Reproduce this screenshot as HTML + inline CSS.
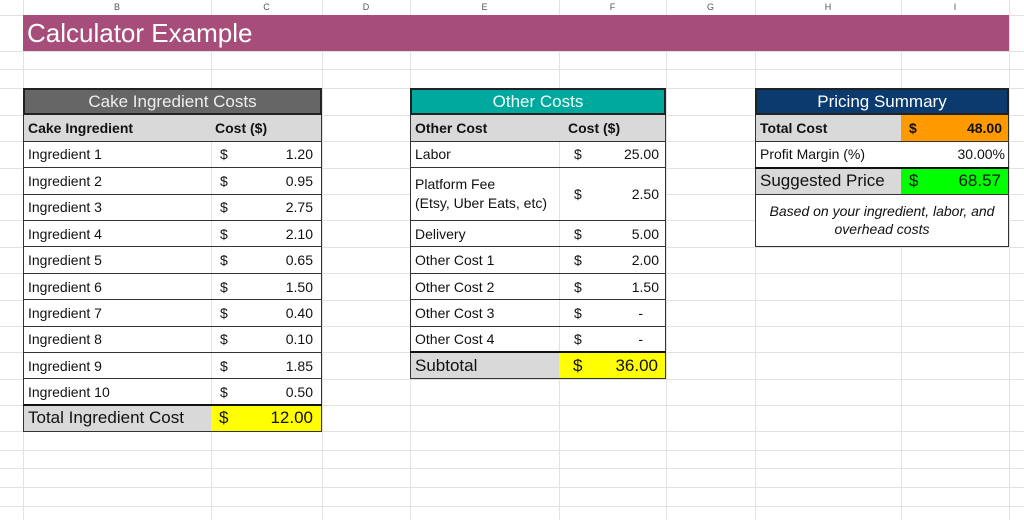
<!DOCTYPE html>
<html><head><meta charset="utf-8"><style>
body{margin:0;width:1024px;height:520px;overflow:hidden;background:#fff;position:relative;font-family:"Liberation Sans",Arial,sans-serif;color:#111}
.v{position:absolute;top:0;height:520px;width:1px;background:#e2e2e2}
.h{position:absolute;left:0;width:1024px;height:1px;background:#e2e2e2}
.ch{position:absolute;top:0;height:15px;font-size:9px;color:#555;text-align:center;line-height:14px}
.c{position:absolute;box-sizing:border-box;display:flex;align-items:center;padding:0 4px;white-space:nowrap;font-size:14px;background:#fff}
.b{font-weight:bold}
.r{justify-content:flex-end}
.ctr{justify-content:center}
.bl{position:absolute;background:#333}
</style></head><body>
<!-- grid -->
<div class="v" style="left:23px"></div><div class="v" style="left:211px"></div><div class="v" style="left:322px"></div><div class="v" style="left:410px"></div><div class="v" style="left:559px"></div><div class="v" style="left:666px"></div><div class="v" style="left:755px"></div><div class="v" style="left:901px"></div><div class="v" style="left:1009px"></div>
<div class="h" style="top:15px"></div><div class="h" style="top:51px"></div><div class="h" style="top:69px"></div><div class="h" style="top:88px"></div><div class="h" style="top:115px"></div><div class="h" style="top:141px"></div><div class="h" style="top:168px"></div><div class="h" style="top:194px"></div><div class="h" style="top:220px"></div><div class="h" style="top:247px"></div><div class="h" style="top:273px"></div><div class="h" style="top:300px"></div><div class="h" style="top:326px"></div><div class="h" style="top:352px"></div><div class="h" style="top:379px"></div><div class="h" style="top:405px"></div><div class="h" style="top:431px"></div><div class="h" style="top:450px"></div><div class="h" style="top:468px"></div><div class="h" style="top:487px"></div><div class="h" style="top:506px"></div>
<div class="ch" style="left:23px;width:188px">B</div><div class="ch" style="left:211px;width:111px">C</div><div class="ch" style="left:322px;width:88px">D</div><div class="ch" style="left:410px;width:149px">E</div><div class="ch" style="left:559px;width:107px">F</div><div class="ch" style="left:666px;width:89px">G</div><div class="ch" style="left:755px;width:146px">H</div><div class="ch" style="left:901px;width:108px">I</div>
<!-- title -->
<div class="c" style="left:23px;top:15px;width:986px;height:36px;background:#a64d79;color:#fff;font-size:26px;padding-left:4px">Calculator Example</div>

<!-- Ingredient table -->
<div class="c ctr" style="left:23px;top:88px;width:299px;height:27px;background:#666;color:#eee;font-size:17px;border:2px solid #222">Cake Ingredient Costs</div>
<div class="c b" style="left:24px;top:115px;width:187px;height:26px;background:#d9d9d9">Cake Ingredient</div>
<div class="c b" style="left:211px;top:115px;width:110px;height:26px;background:#d9d9d9">Cost ($)</div>
<div class="c" style="left:24px;top:141px;width:187px;height:26px">Ingredient 1</div><div class="c" style="left:212px;top:141px;width:109px;height:26px;justify-content:space-between;padding:0 8px">$<span>1.20</span></div>
<div class="c" style="left:24px;top:168px;width:187px;height:26px">Ingredient 2</div><div class="c" style="left:212px;top:168px;width:109px;height:26px;justify-content:space-between;padding:0 8px">$<span>0.95</span></div>
<div class="c" style="left:24px;top:194px;width:187px;height:26px">Ingredient 3</div><div class="c" style="left:212px;top:194px;width:109px;height:26px;justify-content:space-between;padding:0 8px">$<span>2.75</span></div>
<div class="c" style="left:24px;top:220px;width:187px;height:27px">Ingredient 4</div><div class="c" style="left:212px;top:220px;width:109px;height:27px;justify-content:space-between;padding:0 8px">$<span>2.10</span></div>
<div class="c" style="left:24px;top:247px;width:187px;height:26px">Ingredient 5</div><div class="c" style="left:212px;top:247px;width:109px;height:26px;justify-content:space-between;padding:0 8px">$<span>0.65</span></div>
<div class="c" style="left:24px;top:273px;width:187px;height:27px">Ingredient 6</div><div class="c" style="left:212px;top:273px;width:109px;height:27px;justify-content:space-between;padding:0 8px">$<span>1.50</span></div>
<div class="c" style="left:24px;top:300px;width:187px;height:26px">Ingredient 7</div><div class="c" style="left:212px;top:300px;width:109px;height:26px;justify-content:space-between;padding:0 8px">$<span>0.40</span></div>
<div class="c" style="left:24px;top:326px;width:187px;height:26px">Ingredient 8</div><div class="c" style="left:212px;top:326px;width:109px;height:26px;justify-content:space-between;padding:0 8px">$<span>0.10</span></div>
<div class="c" style="left:24px;top:352px;width:187px;height:27px">Ingredient 9</div><div class="c" style="left:212px;top:352px;width:109px;height:27px;justify-content:space-between;padding:0 8px">$<span>1.85</span></div>
<div class="c" style="left:24px;top:379px;width:187px;height:26px">Ingredient 10</div><div class="c" style="left:212px;top:379px;width:109px;height:26px;justify-content:space-between;padding:0 8px">$<span>0.50</span></div>
<div class="c" style="left:24px;top:405px;width:187px;height:26px;background:#d9d9d9;font-size:17px">Total Ingredient Cost</div>
<div class="c" style="left:211px;top:405px;width:110px;height:26px;background:#ff0;font-size:17px;justify-content:space-between;padding:0 8px">$<span>12.00</span></div>
<!-- borders ingredient -->
<div class="bl" style="left:23px;top:115px;width:1px;height:317px"></div>
<div class="bl" style="left:321px;top:115px;width:1px;height:317px"></div>
<div class="bl" style="left:23px;top:431px;width:299px;height:1px"></div>
<div class="bl" style="left:23px;top:141px;width:299px;height:1px"></div>
<div class="bl" style="left:23px;top:167px;width:299px;height:1px"></div>
<div class="bl" style="left:23px;top:194px;width:299px;height:1px"></div>
<div class="bl" style="left:23px;top:220px;width:299px;height:1px"></div>
<div class="bl" style="left:23px;top:246px;width:299px;height:1px"></div>
<div class="bl" style="left:23px;top:273px;width:299px;height:1px"></div>
<div class="bl" style="left:23px;top:299px;width:299px;height:1px"></div>
<div class="bl" style="left:23px;top:326px;width:299px;height:1px"></div>
<div class="bl" style="left:23px;top:352px;width:299px;height:1px"></div>
<div class="bl" style="left:23px;top:378px;width:299px;height:1px"></div>
<div class="bl" style="left:23px;top:404px;width:299px;height:2px;background:#111"></div>

<!-- Other costs -->
<div class="c ctr" style="left:410px;top:88px;width:256px;height:27px;background:#00a99d;color:#f4fffd;font-size:17px;border:2px solid #222">Other Costs</div>
<div class="c b" style="left:411px;top:115px;width:148px;height:26px;background:#d9d9d9">Other Cost</div>
<div class="c b" style="left:559px;top:115px;width:106px;height:26px;background:#d9d9d9;padding-left:9px">Cost ($)</div>
<div class="c" style="left:411px;top:141px;width:148px;height:26px">Labor</div><div class="c" style="left:560px;top:141px;width:105px;height:26px;justify-content:space-between;padding:0 6px 0 14px">$<span>25.00</span></div>
<div class="c" style="left:411px;top:168px;width:148px;height:52px;line-height:19px;white-space:normal"><span>Platform Fee<br>(Etsy, Uber Eats, etc)</span></div><div class="c" style="left:560px;top:168px;width:105px;height:52px;justify-content:space-between;padding:0 6px 0 14px">$<span>2.50</span></div>
<div class="c" style="left:411px;top:220px;width:148px;height:27px">Delivery</div><div class="c" style="left:560px;top:220px;width:105px;height:27px;justify-content:space-between;padding:0 6px 0 14px">$<span>5.00</span></div>
<div class="c" style="left:411px;top:247px;width:148px;height:26px">Other Cost 1</div><div class="c" style="left:560px;top:247px;width:105px;height:26px;justify-content:space-between;padding:0 6px 0 14px">$<span>2.00</span></div>
<div class="c" style="left:411px;top:273px;width:148px;height:27px">Other Cost 2</div><div class="c" style="left:560px;top:273px;width:105px;height:27px;justify-content:space-between;padding:0 6px 0 14px">$<span>1.50</span></div>
<div class="c" style="left:411px;top:300px;width:148px;height:26px">Other Cost 3</div><div class="c" style="left:560px;top:300px;width:105px;height:26px;justify-content:space-between;padding:0 22px 0 14px">$<span>-</span></div>
<div class="c" style="left:411px;top:326px;width:148px;height:26px">Other Cost 4</div><div class="c" style="left:560px;top:326px;width:105px;height:26px;justify-content:space-between;padding:0 22px 0 14px">$<span>-</span></div>
<div class="c" style="left:411px;top:352px;width:148px;height:27px;background:#d9d9d9;font-size:17px">Subtotal</div>
<div class="c" style="left:559px;top:352px;width:106px;height:27px;background:#ff0;font-size:17px;justify-content:space-between;padding:0 7px 0 14px">$<span>36.00</span></div>
<div class="bl" style="left:410px;top:115px;width:1px;height:264px"></div>
<div class="bl" style="left:665px;top:115px;width:1px;height:264px"></div>
<div class="bl" style="left:410px;top:378px;width:256px;height:1px"></div>
<div class="bl" style="left:410px;top:141px;width:256px;height:1px"></div>
<div class="bl" style="left:410px;top:167px;width:256px;height:1px"></div>
<div class="bl" style="left:410px;top:220px;width:256px;height:1px"></div>
<div class="bl" style="left:410px;top:246px;width:256px;height:1px"></div>
<div class="bl" style="left:410px;top:273px;width:256px;height:1px"></div>
<div class="bl" style="left:410px;top:299px;width:256px;height:1px"></div>
<div class="bl" style="left:410px;top:326px;width:256px;height:1px"></div>
<div class="bl" style="left:410px;top:351px;width:256px;height:2px;background:#111"></div>

<!-- Pricing summary -->
<div class="c ctr" style="left:755px;top:88px;width:254px;height:27px;background:#0b3a6e;color:#fff;font-size:17px;border:2px solid #222">Pricing Summary</div>
<div class="c b" style="left:756px;top:115px;width:145px;height:26px;background:#d9d9d9">Total Cost</div>
<div class="c b" style="left:901px;top:115px;width:107px;height:26px;background:#ff9900;justify-content:space-between;padding:0 6px 0 8px">$<span>48.00</span></div>
<div class="c" style="left:756px;top:141px;width:145px;height:26px">Profit Margin (%)</div>
<div class="c r" style="left:901px;top:141px;width:107px;height:26px;padding-right:3px">30.00%</div>
<div class="c" style="left:756px;top:168px;width:145px;height:26px;background:#d9d9d9;font-size:17px">Suggested Price</div>
<div class="c" style="left:901px;top:168px;width:107px;height:26px;background:#00ff00;font-size:17px;justify-content:space-between;padding:0 7px 0 8px">$<span>68.57</span></div>
<div class="c ctr" style="left:756px;top:194px;width:252px;height:52px;font-style:italic;white-space:normal;text-align:center;line-height:18px;font-size:14px">Based on your ingredient, labor, and overhead costs</div>
<div class="bl" style="left:755px;top:115px;width:1px;height:132px"></div>
<div class="bl" style="left:1008px;top:115px;width:1px;height:132px"></div>
<div class="bl" style="left:755px;top:246px;width:254px;height:1px"></div>
<div class="bl" style="left:755px;top:141px;width:254px;height:1px"></div>
<div class="bl" style="left:755px;top:167px;width:254px;height:2px;background:#111"></div>
<div class="bl" style="left:755px;top:194px;width:254px;height:1px"></div>
</body></html>
